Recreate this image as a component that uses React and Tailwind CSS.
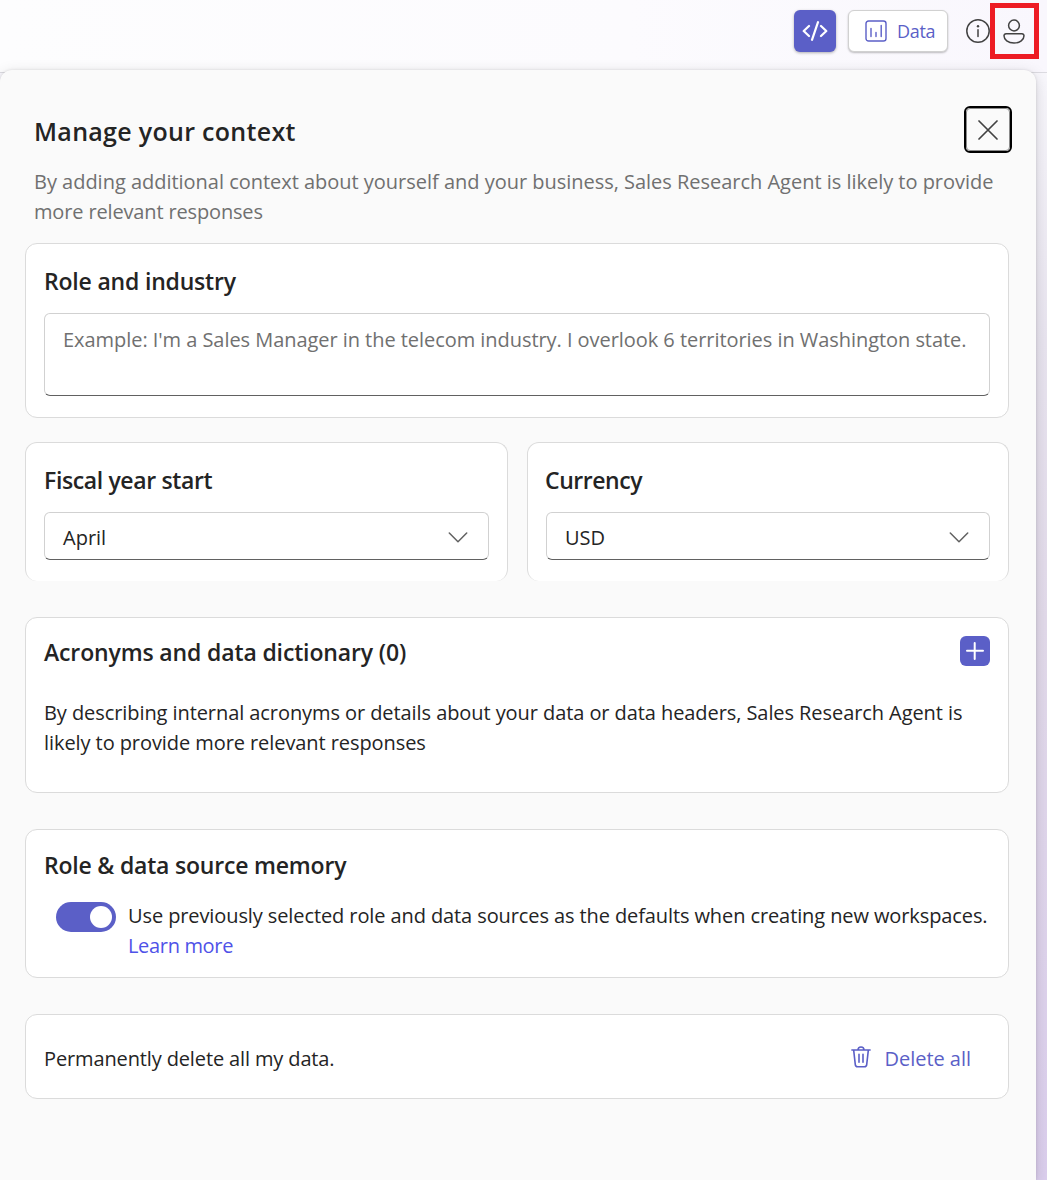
import React from "react";

const heading = "text-[23px] leading-[30px] font-semibold text-[#242424] whitespace-nowrap";
const card = "rounded-[12px] border border-[#dbdbdb] bg-white";
const field = "rounded-[6px] border border-[#d1d1d1] border-b-[#616161] bg-white";

function CodeIcon() {
  return (
    <svg width="26" height="20" viewBox="0 0 26 20" fill="none" stroke="#fff" strokeWidth="2.2" strokeLinecap="round" strokeLinejoin="round">
      <path d="M7 5 1.700 10 7 15M19 5l5.300 5-5.300 5M16 1.200 10 18.800" />
    </svg>
  );
}

function ChartIcon() {
  return (
    <svg width="22" height="22" viewBox="0 0 22 22" fill="none" stroke="#5b5fc7" strokeWidth="1.400" strokeLinecap="round">
      <rect x="1" y="1" width="20" height="20" rx="2.600" />
      <path d="M6 8.500v8M11 12.500v4M16.200 5.500v11" />
    </svg>
  );
}

function InfoIcon() {
  return (
    <svg width="24" height="24" viewBox="0 0 24 24" fill="none" stroke="#424242" strokeWidth="1.500" strokeLinecap="round">
      <circle cx="12" cy="12" r="11.200" />
      <path d="M12 10.800v6.700" />
      <circle cx="12" cy="7.300" r="1.200" fill="#424242" stroke="none" />
    </svg>
  );
}

function PersonIcon() {
  return (
    <svg width="22" height="25" viewBox="0 0 22 25" fill="none" stroke="#424242" strokeWidth="1.500">
      <circle cx="11" cy="6.500" r="5.400" />
      <path d="M3 14.800h16a2 2 0 0 1 2 2c0 4-4 7.200-10 7.200S1 20.800 1 16.800a2 2 0 0 1 2-2Z" />
    </svg>
  );
}

function CloseIcon() {
  return (
    <svg width="20" height="20" viewBox="0 0 20 20" fill="none" stroke="#424242" strokeWidth="1.700" strokeLinecap="round">
      <path d="m1 1 18 18M19 1 1 19" />
    </svg>
  );
}

function ChevronIcon() {
  return (
    <svg width="20" height="11" viewBox="0 0 20 11" fill="none" stroke="#616161" strokeWidth="1.500" strokeLinecap="round" strokeLinejoin="round">
      <path d="m1.300 1 8.700 8.700L18.700 1" />
    </svg>
  );
}

function PlusIcon() {
  return (
    <svg width="18" height="18" viewBox="0 0 18 18" fill="none" stroke="#fff" strokeWidth="2" strokeLinecap="round">
      <path d="M8.700 1v16M1 8.700h16" />
    </svg>
  );
}

function TrashIcon() {
  return (
    <svg width="20" height="22" viewBox="0 0 20 22" fill="none" stroke="#5b5fc7" strokeWidth="1.600" strokeLinecap="round">
      <path d="M.900 4h18.200M7 4a3 3 0 0 1 6 0M2.700 4.300l1.600 14.300A2.300 2.300 0 0 0 6.600 20.700h6.800a2.300 2.300 0 0 0 2.300-2.100L17.300 4.300M8 8.300v8M12 8.300v8" />
    </svg>
  );
}

function Select({ value }) {
  return (
    <button className={`${field} mt-[17px] flex h-[48px] w-full items-center justify-between pt-[2px] pr-[20px] pl-[18px]`}>
      <span className="mt-[2px]">{value}</span>
      <ChevronIcon />
    </button>
  );
}

export default function App() {
  return (
    <div className="flex h-[1180px] w-[1047px] flex-col overflow-hidden bg-[linear-gradient(180deg,#fcfcfd_0px,#f8f7fc_80px,#e9e5f0_340px,#e3dbeb_620px,#dccfee_1180px)] font-['Open_Sans','Noto_Sans',sans-serif] text-[20px] leading-[30px] text-[#242424]">
      <header className="flex h-[73px] shrink-0 items-start justify-end border-b border-[#dcdbe1] bg-[linear-gradient(90deg,#fdfdfe,#fcfbfe_60%,#f9f7fd)] pt-[3px] pr-[8px]">
        <button aria-label="Code view" className="mt-[7px] flex h-[42px] w-[42px] items-center justify-center rounded-[6px] bg-[#5b5fc7] shadow-[0_1px_3px_rgba(0,0,0,0.3)]">
          <CodeIcon />
        </button>
        <button className="mt-[7px] ml-[12px] flex h-[42px] w-[100px] items-center rounded-[6px] border border-[#d1d1d1] bg-white pl-[16px] text-[18px] tracking-[-0.300px] text-[#5b5fc7] shadow-[0_1px_2px_rgba(0,0,0,0.25)]">
          <ChartIcon />
          <span className="ml-[10px]">Data</span>
        </button>
        <button aria-label="Information" className="mt-[16px] ml-[18px]">
          <InfoIcon />
        </button>
        <button aria-label="Manage your context" className="flex h-[56px] w-[49px] items-center justify-center border-[5px] border-[#ed1c24] pr-[2px]">
          <PersonIcon />
        </button>
      </header>

      <main className="relative -mt-[3px] w-[1036px] grow rounded-t-[12px] bg-[#fafafa] pr-[27px] pl-[25px] shadow-[0_0_3px_rgba(0,0,0,0.12),0_4px_16px_rgba(0,0,0,0.14)]">
        <div className="flex h-[97px] justify-between pt-[36px] pl-[9px]">
          <h1 className="mt-[10px] text-[25px] leading-[30px] font-semibold tracking-[0.300px] whitespace-nowrap">Manage your context</h1>
          <button aria-label="Close" className="-mr-[3px] flex h-[47px] w-[48px] items-center justify-center rounded-[6px] border-2 border-black bg-[#fafafa] outline-1 -outline-offset-3 outline-[#8a8a8a]">
            <CloseIcon />
          </button>
        </div>
        <p className="h-[76px] pl-[9px] tracking-[-0.020px] whitespace-nowrap text-[#707070]">
          By adding additional context about yourself and your business, Sales Research Agent is likely to provide
          <br />
          <span className="tracking-[-0.150px]">more relevant responses</span>
        </p>

        <section className={`${card} h-[175px] px-[18px] pt-[22px]`}>
          <h2 className={`${heading} tracking-[-0.190px]`}>Role and industry</h2>
          <div className={`${field} mt-[17px] h-[83px] pt-[11px] pl-[18px] tracking-[-0.050px] whitespace-nowrap text-[#707070]`}>
            Example: I'm a Sales Manager in the telecom industry. I overlook 6 territories in Washington state.
          </div>
        </section>

        <div className="mt-[24px] flex gap-[19px]">
          <section className="h-[139px] w-[483px] rounded-[12px] border border-b-0 border-[#dbdbdb] bg-white px-[18px] pt-[22px]">
            <h2 className={`${heading} tracking-[-0.370px]`}>Fiscal year start</h2>
            <Select value="April" />
          </section>
          <section className="h-[139px] w-[482px] rounded-[12px] border border-b-0 border-[#dbdbdb] bg-white px-[18px] pt-[22px]">
            <h2 className={`${heading} -ml-px tracking-[-0.450px]`}>Currency</h2>
            <Select value="USD" />
          </section>
        </div>

        <section className={`${card} mt-[36px] h-[176px] px-[18px] pt-[18px]`}>
          <div className="flex items-start justify-between">
            <h2 className={`${heading} mt-px tracking-[-0.140px]`}>Acronyms and data dictionary (0)</h2>
            <button aria-label="Add entry" className="flex h-[30px] w-[30px] items-center justify-center rounded-[6px] bg-[#5b5fc7]">
              <PlusIcon />
            </button>
          </div>
          <p className="mt-[31px] tracking-[-0.075px] whitespace-nowrap">
            By describing internal acronyms or details about your data or data headers, Sales Research Agent is
            <br />
            likely to provide more relevant responses
          </p>
        </section>

        <section className={`${card} mt-[36px] h-[149px] px-[18px] pt-[20px]`}>
          <h2 className={`${heading} tracking-[-0.200px]`}>Role &amp; data source memory</h2>
          <div className="mt-[21px] flex pl-[12px]">
            <button role="switch" aria-checked="true" aria-label="Role and data source memory" className="mt-px flex h-[30px] w-[60px] shrink-0 items-center justify-end rounded-full bg-[#5b5fc7] pr-[4px]">
              <span className="h-[22px] w-[22px] rounded-full bg-white" />
            </button>
            <p className="ml-[12px] tracking-[-0.100px] whitespace-nowrap">
              Use previously selected role and data sources as the defaults when creating new workspaces.
              <br />
              <a className="tracking-[-0.330px] text-[#4f52e8]">Learn more</a>
            </p>
          </div>
        </section>

        <section className={`${card} mt-[36px] flex h-[85px] items-center justify-between pt-[4px] pr-[37px] pl-[18px]`}>
          <p className="tracking-[-0.130px]">Permanently delete all my data.</p>
          <button className="flex items-center text-[#5b5fc7]">
            <span className="-mt-[3px]"><TrashIcon /></span>
            <span className="ml-[14px] tracking-[-0.030px]">Delete all</span>
          </button>
        </section>
      </main>
    </div>
  );
}
